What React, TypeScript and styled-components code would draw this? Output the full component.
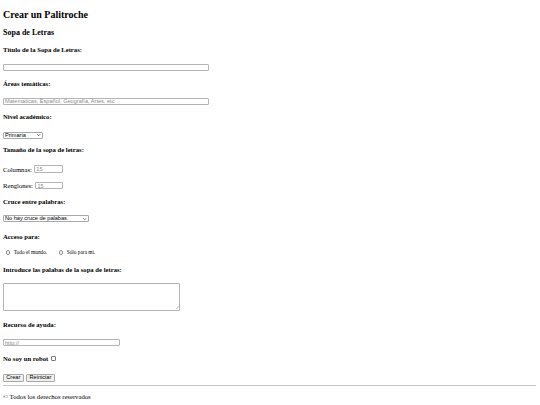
import React from 'react'
import styled, { createGlobalStyle } from 'styled-components'

const GlobalStyle = createGlobalStyle`
  html, body {
    background: #fff;
  }
  body {
    margin: 0;
    font-family: 'Liberation Serif', 'Times New Roman', serif;
    font-size: 5.33px;
    color: #000;
  }
`

const controlFont = `
  font-family: 'Liberation Sans', Arial, sans-serif;
  font-size: 5.6px;
  line-height: 1;
`

const Page = styled.main`
  display: flex;
  flex-direction: column;
  align-items: flex-start;
  padding: 8.5px 4px 0 3px;
`

const Title = styled.h1`
  font-size: 10px;
  line-height: 12px;
  font-weight: 700;
  margin: 0;
`

const Subtitle = styled.h2`
  font-size: 8px;
  line-height: 10px;
  font-weight: 700;
  margin: 7.8px 0 0;
`

const FieldLabel = styled.h3<{ $mt?: number }>`
  display: flex;
  align-items: center;
  gap: 3px;
  font-size: 6.67px;
  line-height: 8px;
  font-weight: 700;
  margin: ${({ $mt = 9 }) => $mt}px 0 0;
`

const Line = styled.div<{ $mt?: number; $large?: boolean }>`
  display: flex;
  align-items: center;
  gap: 2.5px;
  font-size: ${({ $large }) => ($large ? '6.67px' : '5.33px')};
  line-height: 7px;
  margin-top: ${({ $mt = 9.5 }) => $mt}px;
`

const TextInput = styled.input<{ $width: number }>`
  ${controlFont}
  box-sizing: border-box;
  width: ${({ $width }) => $width}px;
  height: 7.4px;
  padding: 0 1px;
  margin: 0;
  border: 1px solid #b4b4b4;
  border-radius: 1px;
  background: #fff;
  color: #000;
  outline: none;
  &::placeholder {
    color: #8c8c8c;
  }
`

const AreaBox = styled.div`
  position: relative;
  display: flex;
`

const TextArea = styled.textarea`
  ${controlFont}
  box-sizing: border-box;
  width: 177.4px;
  height: 27.4px;
  margin: 0;
  border: 1px solid #b4b4b4;
  border-radius: 1px;
  resize: none;
  outline: none;
`

const Grip = styled.svg`
  position: absolute;
  right: 1.5px;
  bottom: 1.5px;
  width: 3px;
  height: 3px;
  pointer-events: none;
`

const SelectBox = styled.div<{ $width: number }>`
  position: relative;
  width: ${({ $width }) => $width}px;
  height: 7px;
`

const Select = styled.select`
  ${controlFont}
  appearance: none;
  box-sizing: border-box;
  width: 100%;
  height: 100%;
  margin: 0;
  padding: 0 1px;
  border: 1px solid #a8a8a8;
  border-radius: 1px;
  background: #fff;
  color: #000;
  outline: none;
`

const Chevron = styled.svg`
  position: absolute;
  right: 2.5px;
  top: 50%;
  width: 3.4px;
  height: 2.4px;
  transform: translateY(-50%);
  pointer-events: none;
`

const Radio = styled.input.attrs({ type: 'radio' })<{ $ml: number }>`
  appearance: none;
  box-sizing: border-box;
  width: 4.5px;
  height: 4.5px;
  margin: 0 1px 0 ${({ $ml }) => $ml}px;
  border: 0.6px solid #8c8c8c;
  border-radius: 50%;
  background: #fff;
`

const Check = styled.input.attrs({ type: 'checkbox' })`
  appearance: none;
  box-sizing: border-box;
  width: 4.8px;
  height: 4.8px;
  margin: 0;
  border: 0.6px solid #7a7a7a;
  border-radius: 1px;
  background: #fff;
`

const Button = styled.button`
  ${controlFont}
  box-sizing: border-box;
  height: 8.5px;
  padding: 0 2.3px;
  margin: 0;
  border: 1px solid #a8a8a8;
  border-radius: 1px;
  background: #efefef;
  color: #000;
`

const Buttons = styled.div`
  display: flex;
  gap: 2.6px;
  margin-top: 11px;
`

const Rule = styled.hr`
  align-self: stretch;
  border: none;
  border-top: 1px solid #c4c4c4;
  margin: 3px 0 0;
`

const Footer = styled.p`
  font-size: 6.67px;
  line-height: 8px;
  margin: 7px 0 0;
`

function ChevronIcon() {
  return (
    <Chevron viewBox="0 0 10 7">
      <path d="M1 1.5 L5 5.5 L9 1.5" fill="none" stroke="#222" strokeWidth="2" />
    </Chevron>
  )
}

export default function App() {
  return (
    <>
      <GlobalStyle />
      <Page>
        <Title>Crear un Palitroche</Title>
        <Subtitle>Sopa de Letras</Subtitle>

        <FieldLabel $mt={7.7}>Título de la Sopa de Letras:</FieldLabel>
        <Line $mt={9.7}>
          <TextInput $width={206} />
        </Line>

        <FieldLabel $mt={9.4}>Áreas temáticas:</FieldLabel>
        <Line $mt={9.2}>
          <TextInput
            $width={206}
            placeholder="Matematicas, Español, Geografía, Artes, etc"
          />
        </Line>

        <FieldLabel $mt={8.4}>Nivel académico:</FieldLabel>
        <Line $mt={10.5}>
          <SelectBox $width={40}>
            <Select defaultValue="primaria">
              <option value="primaria">Primaria</option>
            </Select>
            <ChevronIcon />
          </SelectBox>
        </Line>

        <FieldLabel $mt={7.5}>Tamaño de la sopa de letras:</FieldLabel>
        <Line $mt={11} $large>
          Columnas: <TextInput $width={28.4} placeholder="15" />
        </Line>
        <Line $mt={9} $large>
          Renglones: <TextInput $width={28} placeholder="15" />
        </Line>

        <FieldLabel $mt={8.4}>Cruce entre palabras:</FieldLabel>
        <Line $mt={9.8}>
          <SelectBox $width={86}>
            <Select defaultValue="no">
              <option value="no">No hay cruce de palabas.</option>
            </Select>
            <ChevronIcon />
          </SelectBox>
        </Line>

        <FieldLabel $mt={10.5}>Acceso para:</FieldLabel>
        <Line $mt={8}>
          <Radio name="acceso" $ml={2.7} />
          Todo el mundo.
          <Radio name="acceso" $ml={9} />
          Sólo para mi.
        </Line>

        <FieldLabel $mt={10}>Introduce las palabas de la sopa de letras:</FieldLabel>
        <Line $mt={9.3}>
          <AreaBox>
            <TextArea />
            <Grip viewBox="0 0 6 6">
              <path d="M0.5 5.5 L5.5 0.5 M3 5.5 L5.5 3" stroke="#999" strokeWidth="1" />
            </Grip>
          </AreaBox>
        </Line>

        <FieldLabel $mt={10.8}>Recurso de ayuda:</FieldLabel>
        <Line $mt={9.5}>
          <TextInput $width={117} placeholder="http://" />
        </Line>

        <FieldLabel $mt={8.6}>
          No soy un robot <Check />
        </FieldLabel>

        <Buttons>
          <Button>Crear</Button>
          <Button>Reiniciar</Button>
        </Buttons>
        <Rule />
        <Footer>© Todos los derechos reservados</Footer>
      </Page>
    </>
  )
}
